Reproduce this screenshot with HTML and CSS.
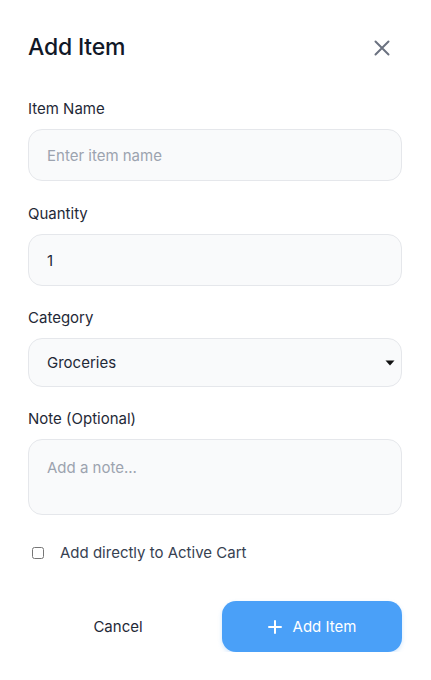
FILE: index.html
```html
<!DOCTYPE html>
<html lang="en">
<head>
<meta charset="utf-8">
<title>Add Item</title>
<link rel="stylesheet" href="styles.css">
</head>
<body>
<div class="dialog">
  <div class="header">
    <h1 class="title">Add Item</h1>
    <button class="close" aria-label="Close">
      <svg width="16" height="16" viewBox="0 0 16 16"><path d="M1.5 1.5L14.5 14.5M14.5 1.5L1.5 14.5" stroke="#6b7280" stroke-width="2" stroke-linecap="round"/></svg>
    </button>
  </div>

  <div class="field first">
    <label class="label">Item Name</label>
    <input class="control" type="text" placeholder="Enter item name">
  </div>

  <div class="field">
    <label class="label">Quantity</label>
    <input class="control" type="text" value="1">
  </div>

  <div class="field">
    <label class="label">Category</label>
    <div class="control select">
      <span>Groceries</span>
      <svg width="10" height="6" viewBox="0 0 10 6"><path d="M0.5 0.5H9.5L5 5.5Z" fill="#111"/></svg>
    </div>
  </div>

  <div class="field">
    <label class="label">Note (Optional)</label>
    <textarea class="control area" placeholder="Add a note..."></textarea>
  </div>

  <label class="check">
    <input type="checkbox" class="box">
    <span>Add directly to Active Cart</span>
  </label>

  <div class="actions">
    <button class="btn cancel">Cancel</button>
    <button class="btn primary">
      <svg width="14" height="14" viewBox="0 0 14 14"><path d="M7 1V13M1 7H13" stroke="#fff" stroke-width="2" stroke-linecap="round"/></svg>
      <span>Add Item</span>
    </button>
  </div>
</div>
</body>
</html>
```
FILE: styles.css
```css
* { box-sizing: border-box; }
html, body { margin: 0; background: #fff; }
body {
  font-family: Inter, "Noto Sans", "Liberation Sans", sans-serif;
  color: #1f2937;
}
.dialog {
  padding: 28px 29px 0 28px;
  display: flex;
  flex-direction: column;
}
.header {
  display: flex;
  align-items: center;
  justify-content: space-between;
  height: 38px;
  margin-bottom: 33px;
}
.title {
  margin: 0;
  font-size: 23px;
  font-weight: 500;
  color: #111827;
  letter-spacing: -0.2px;
}
.close {
  border: 0;
  background: none;
  padding: 0;
  margin-right: 12px;
  margin-top: 2px;
  width: 16px;
  height: 16px;
  display: flex;
}
.field {
  display: flex;
  flex-direction: column;
  margin-bottom: 22px;
}
.field.first { margin-bottom: 23px; }
.label {
  font-size: 15px;
  line-height: 20px;
  color: #1f2937;
  font-weight: 400;
  margin-bottom: 10px;
}
.control {
  height: 52px;
  width: 100%;
  border: 1px solid #e5e7eb;
  background: #f9fafb;
  border-radius: 14px;
  padding: 0 18px;
  font: inherit;
  font-size: 15px;
  color: #1f2937;
  outline: none;
}
.control::placeholder { color: #9ca3af; }
.select {
  height: 49px;
  display: flex;
  align-items: center;
  justify-content: space-between;
  padding-right: 6px;
}
.area {
  height: 76px;
  padding-top: 18px;
  resize: none;
  display: block;
}
.check {
  display: flex;
  align-items: center;
  gap: 16px;
  font-size: 15px;
  color: #374151;
  margin-top: 6px;
}
.box {
  margin: 0 0 0 4px;
  width: 12px;
  height: 12px;
}
.actions {
  display: flex;
  align-items: center;
  margin-top: 39px;
}
.btn {
  font: inherit;
  font-size: 15px;
  border: 0;
  cursor: pointer;
}
.cancel {
  background: none;
  color: #1f2937;
  width: 180px;
  height: 51px;
  margin-right: 14px;
}
.primary {
  flex: 1;
  height: 51px;
  border-radius: 14px;
  background: #4aa0f8;
  color: #fff;
  display: flex;
  align-items: center;
  justify-content: center;
  gap: 11px;
  box-shadow: 0 2px 4px rgba(74, 160, 248, 0.25);
}
```
